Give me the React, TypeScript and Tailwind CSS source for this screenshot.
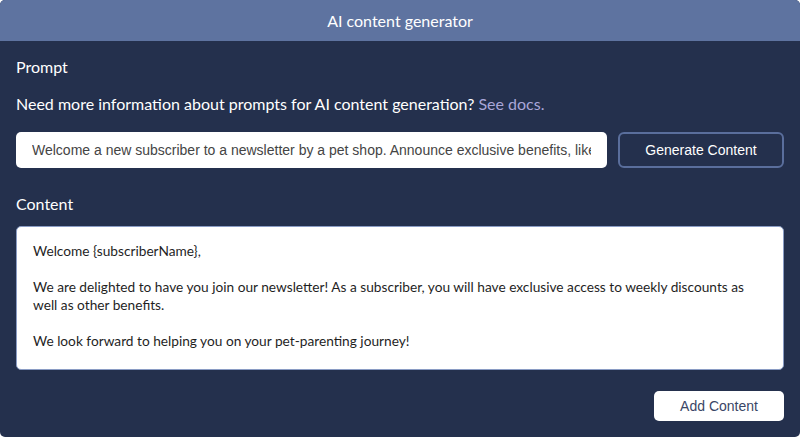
import React from "react";

const nunito = { fontFamily: "Lato, 'Noto Sans', sans-serif" };

export default function App() {
  return (
    <div className="w-[800px] h-[437px] bg-white">
      <div className="w-full h-full rounded-[5px] overflow-hidden bg-[#24304d] flex flex-col" style={nunito}>
        <div className="h-[41px] bg-[#5e73a0] flex items-center justify-center text-white text-[16px]">
          AI content generator
        </div>
        <div className="flex flex-col px-4">
          <div className="text-white text-[16px] leading-[20px] mt-[16px]">Prompt</div>
          <div className="text-white text-[16px] leading-[20px] mt-[17px]">
            Need more information about prompts for AI content generation?{" "}
            <span className="text-[#a9a6d8]">See docs.</span>
          </div>
          <div className="flex gap-[11px] mt-[18px]">
            <div className="flex-1 min-w-0 h-[36px] bg-white rounded-[5px] flex items-center px-4">
              <div className="flex-1 min-w-0 overflow-hidden">
                <div
                  className="text-[14px] text-[#444] whitespace-nowrap"
                  style={{ fontFamily: "'Liberation Sans', Arial, sans-serif" }}
                >
                  Welcome a new subscriber to a newsletter by a pet shop. Announce exclusive benefits, like weekly discounts.
                </div>
              </div>
            </div>
            <button
              className="w-[166px] h-[36px] shrink-0 rounded-[6px] border-2 border-[#5a6e9c] bg-[#24304d] text-white text-[14px]"
              style={{ fontFamily: "'Liberation Sans', Arial, sans-serif" }}
            >
              Generate Content
            </button>
          </div>
          <div className="text-white text-[16px] leading-[20px] mt-[26px]">Content</div>
          <div className="mt-[12px] h-[144px] bg-white rounded-[5px] border border-[#8a9cc4] px-4 pt-[15px] text-[13.7px] leading-[18px] text-[#1f1f1f]">
            <p>Welcome {"{subscriberName}"},</p>
            <p className="mt-[18px]">
              We are delighted to have you join our newsletter! As a subscriber, you will have exclusive access to weekly discounts as well as other benefits.
            </p>
            <p className="mt-[18px]">We look forward to helping you on your pet-parenting journey!</p>
          </div>
          <div className="flex justify-end mt-[21px]">
            <button
              className="w-[130px] h-[30px] bg-white rounded-[5px] text-[14px] text-[#3a4666]"
              style={{ fontFamily: "'Liberation Sans', Arial, sans-serif" }}
            >
              Add Content
            </button>
          </div>
        </div>
      </div>
    </div>
  );
}
